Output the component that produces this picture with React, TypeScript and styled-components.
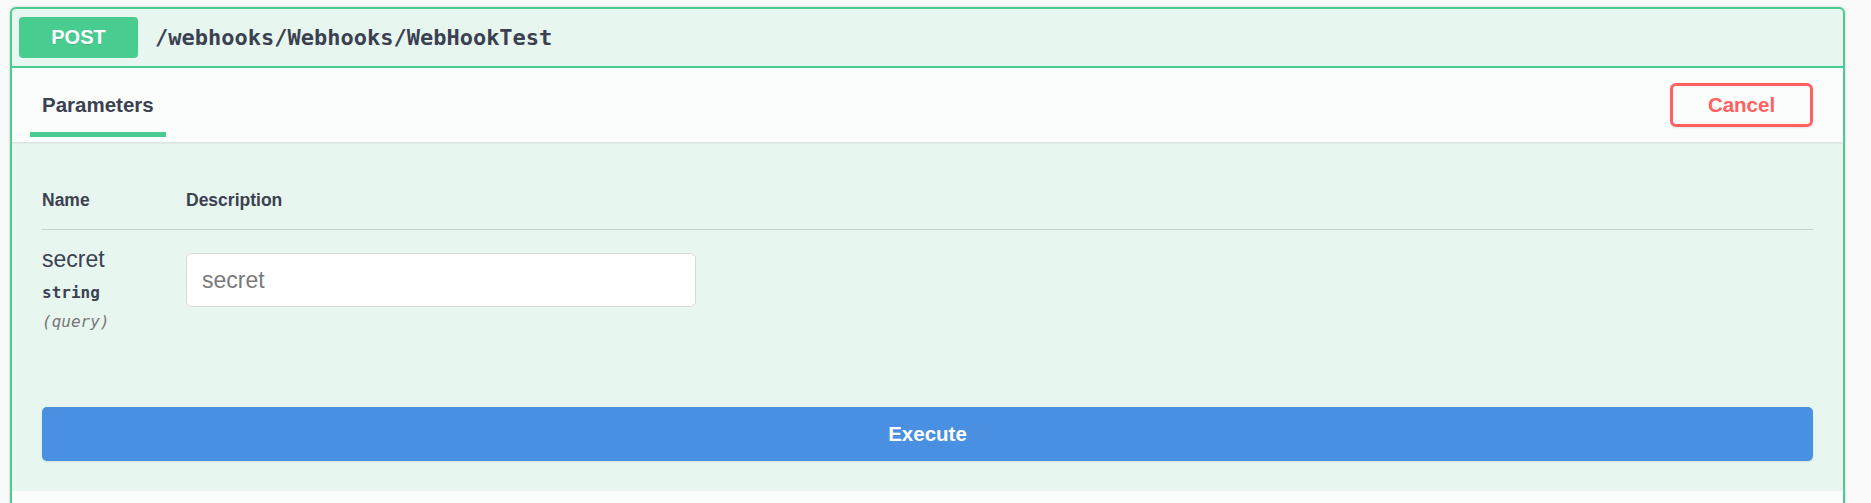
import React from "react";
import styled, { createGlobalStyle } from "styled-components";

const GlobalStyle = createGlobalStyle`
  body {
    margin: 0;
    background: #fafafa;
    font-family: "Liberation Sans", Arial, sans-serif;
    color: #3b4151;
  }
`;

const Page = styled.div`
  padding: 7px 26px 0 10px;
`;

const OpBlock = styled.div`
  border: 2px solid #49cc90;
  border-radius: 6px;
  background: #e8f6f0;
  box-shadow: 0 0 3px rgba(0, 0, 0, 0.19);
  overflow: hidden;
`;

const Summary = styled.div`
  display: flex;
  align-items: center;
  padding: 8px 7px;
  border-bottom: 2px solid #49cc90;
`;

const Method = styled.span`
  display: flex;
  align-items: center;
  justify-content: center;
  width: 119px;
  height: 41px;
  border-radius: 4px;
  background: #49cc90;
  color: #fff;
  font-size: 20px;
  font-weight: 700;
  text-shadow: 0 1px 0 rgba(0, 0, 0, 0.1);
`;

const Path = styled.span`
  margin-left: 17px;
  font-family: "DejaVu Sans Mono", "Liberation Mono", monospace;
  font-size: 22px;
  font-weight: 600;
  color: #3b4151;
`;

const SectionHeader = styled.div`
  display: flex;
  align-items: center;
  justify-content: space-between;
  height: 74px;
  padding: 0 30px 0 18px;
  background: rgba(255, 255, 255, 0.8);
  box-shadow: 0 1px 2px rgba(0, 0, 0, 0.1);
`;

const Tab = styled.div`
  align-self: flex-end;
  margin-bottom: 5px;
  padding: 0 12px 15px;
  border-bottom: 5px solid #49cc90;
  font-size: 20.5px;
  line-height: 24px;
  font-weight: 700;
`;

const CancelButton = styled.button`
  width: 143px;
  height: 44px;
  margin-top: -1px;
  border: 3px solid #ff6060;
  border-radius: 6px;
  background: transparent;
  box-shadow: 0 1px 2px rgba(0, 0, 0, 0.1);
  color: #ff6060;
  font-family: inherit;
  font-size: 20.5px;
  font-weight: 700;
`;

const Body = styled.div`
  padding: 0 30px 30px;
`;

const HeadRow = styled.div`
  display: grid;
  grid-template-columns: 144px 1fr;
  padding: 48px 0 19px;
  border-bottom: 1px solid rgba(59, 65, 81, 0.2);
  font-size: 17.5px;
  line-height: 20px;
  font-weight: 700;
`;

const ParamRow = styled.div`
  display: grid;
  grid-template-columns: 144px 1fr;
  padding-top: 16px;
`;

const NameCell = styled.div`
  display: flex;
  flex-direction: column;
`;

const ParamName = styled.div`
  font-size: 23px;
  line-height: 26px;
`;

const ParamMeta = styled.div<{ $italic?: boolean }>`
  margin-top: ${(p) => (p.$italic ? "9px" : "11px")};
  font-family: "DejaVu Sans Mono", "Liberation Mono", monospace;
  font-size: 16px;
  line-height: 20px;
  font-weight: ${(p) => (p.$italic ? 400 : 700)};
  font-style: ${(p) => (p.$italic ? "italic" : "normal")};
  color: ${(p) => (p.$italic ? "#777" : "#3b4151")};
`;

const TextInput = styled.input`
  box-sizing: border-box;
  width: 510px;
  height: 54px;
  margin-top: 7px;
  padding: 0 15px;
  border: 1px solid #d9d9d9;
  border-radius: 6px;
  background: #fff;
  font-family: "Liberation Sans", Arial, sans-serif;
  font-size: 23px;
  color: #3b4151;
  outline: none;

  &::placeholder {
    color: #7a7a7a;
  }
`;

const ExecuteButton = styled.button`
  display: block;
  width: 100%;
  height: 54px;
  margin-top: 75px;
  border: none;
  border-radius: 5px;
  background: #4990e2;
  box-shadow: 0 1px 2px rgba(0, 0, 0, 0.1);
  color: #fff;
  font-family: inherit;
  font-size: 20.5px;
  font-weight: 700;
`;

const ResponsesHeader = styled.div`
  height: 60px;
  background: rgba(255, 255, 255, 0.8);
`;

export default function App() {
  return (
    <>
      <GlobalStyle />
      <Page>
        <OpBlock>
          <Summary>
            <Method>POST</Method>
            <Path>/webhooks/Webhooks/WebHookTest</Path>
          </Summary>
          <SectionHeader>
            <Tab>Parameters</Tab>
            <CancelButton>Cancel</CancelButton>
          </SectionHeader>
          <Body>
            <HeadRow>
              <div>Name</div>
              <div>Description</div>
            </HeadRow>
            <ParamRow>
              <NameCell>
                <ParamName>secret</ParamName>
                <ParamMeta>string</ParamMeta>
                <ParamMeta $italic>(query)</ParamMeta>
              </NameCell>
              <div>
                <TextInput placeholder="secret" />
              </div>
            </ParamRow>
            <ExecuteButton>Execute</ExecuteButton>
          </Body>
          <ResponsesHeader />
        </OpBlock>
      </Page>
    </>
  );
}
